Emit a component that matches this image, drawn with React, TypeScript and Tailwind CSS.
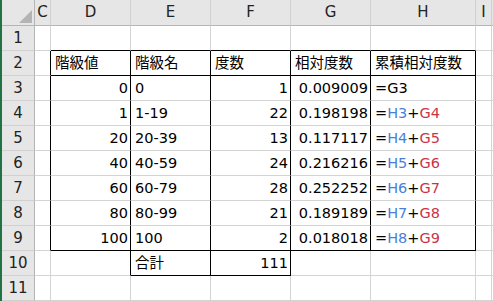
type Cell = {
  text?: React.ReactNode;
  align?: 'left' | 'right';
  r?: boolean; // black right edge
  b?: boolean; // black bottom edge
};

const cols = ['C', 'D', 'E', 'F', 'G', 'H', 'I', ''];

const Ref = ({ blue, red }: { blue: string; red: string }) => (
  <span>
    =<span className="text-[#4a7fd8]">{blue}</span>+<span className="text-[#cc3346]">{red}</span>
  </span>
);

const freq = [
  [0, '0', 1, '0.009009'],
  [1, '1-19', 22, '0.198198'],
  [20, '20-39', 13, '0.117117'],
  [40, '40-59', 24, '0.216216'],
  [60, '60-79', 28, '0.252252'],
  [80, '80-99', 21, '0.189189'],
  [100, '100', 2, '0.018018'],
] as const;

const buildRows = (): Cell[][] => {
  const empty = (): Cell[] => cols.map(() => ({}));
  const rows: Cell[][] = [];

  // row 1: top edge of the table
  const r1 = empty();
  for (let c = 1; c <= 5; c++) r1[c].b = true;
  rows.push(r1);

  // row 2: headings
  const r2 = empty();
  r2[0].r = true;
  ['階級値', '階級名', '度数', '相対度数', '累積相対度数'].forEach((t, i) => {
    r2[i + 1] = { text: t, align: 'left', r: true, b: true };
  });
  rows.push(r2);

  freq.forEach(([d, e, f, g], i) => {
    const row = empty();
    row[0].r = true;
    const last = i === freq.length - 1;
    row[1] = { text: d, align: 'right', r: true, b: last };
    row[2] = { text: e, align: 'left', r: true, b: last };
    row[3] = { text: f, align: 'right', r: true, b: last };
    row[4] = { text: g, align: 'right', r: true, b: last };
    row[5] = {
      text: i === 0 ? '=G3' : <Ref blue={`H${i + 2}`} red={`G${i + 3}`} />,
      align: 'left',
      r: true,
      b: last,
    };
    rows.push(row);
  });

  // row 10: total
  const r10 = empty();
  r10[1].r = true;
  r10[2] = { text: '合計', align: 'left', r: true, b: true };
  r10[3] = { text: 111, align: 'right', r: true, b: true };
  rows.push(r10);

  rows.push(empty());
  return rows;
};

export default function App() {
  const rows = buildRows();
  return (
    <div
      className="w-[493px] h-[301px] overflow-hidden bg-white border-l-2 border-[#217346] text-[14.5px] text-black"
      style={{ fontFamily: '"DejaVu Sans", "Noto Sans CJK JP", sans-serif' }}
    >
      <div className="grid grid-cols-[33px_16px_80px_80px_80px_80px_105px_16px_1fr] grid-rows-[26px_repeat(11,25px)]">
        {/* corner */}
        <div className="relative bg-[#e6e6e6] border-r border-b border-[#b5b5b5]">
          <div className="absolute right-[2px] bottom-[2px] w-0 h-0 border-l-[13px] border-l-transparent border-b-[13px] border-b-[#b4b4b4]" />
        </div>
        {cols.map((c, i) => (
          <div
            key={i}
            className="bg-[#e6e6e6] border-r border-r-[#d0d0d0] border-b border-b-[#b5b5b5] flex items-center justify-center text-[#222] text-[15px]"
          >
            {c}
          </div>
        ))}

        {rows.map((row, ri) => (
          <div key={ri} className="contents">
            <div className="bg-[#e6e6e6] border-r border-r-[#b5b5b5] border-b border-b-[#d0d0d0] flex items-center justify-center text-[#222] text-[15px]">
              {ri + 1}
            </div>
            {row.map((cell, ci) => (
              <div
                key={ci}
                className={`flex items-center whitespace-nowrap overflow-hidden pt-[2px] border-r border-b ${
                  cell.r ? 'border-r-black' : 'border-r-[#d4d4d4]'
                } ${cell.b ? 'border-b-black' : 'border-b-[#d4d4d4]'} ${
                  cell.align === 'right' ? 'justify-end pr-[2px]' : 'justify-start pl-[4px]'
                }`}
              >
                {cell.text}
              </div>
            ))}
          </div>
        ))}
      </div>
    </div>
  );
}
